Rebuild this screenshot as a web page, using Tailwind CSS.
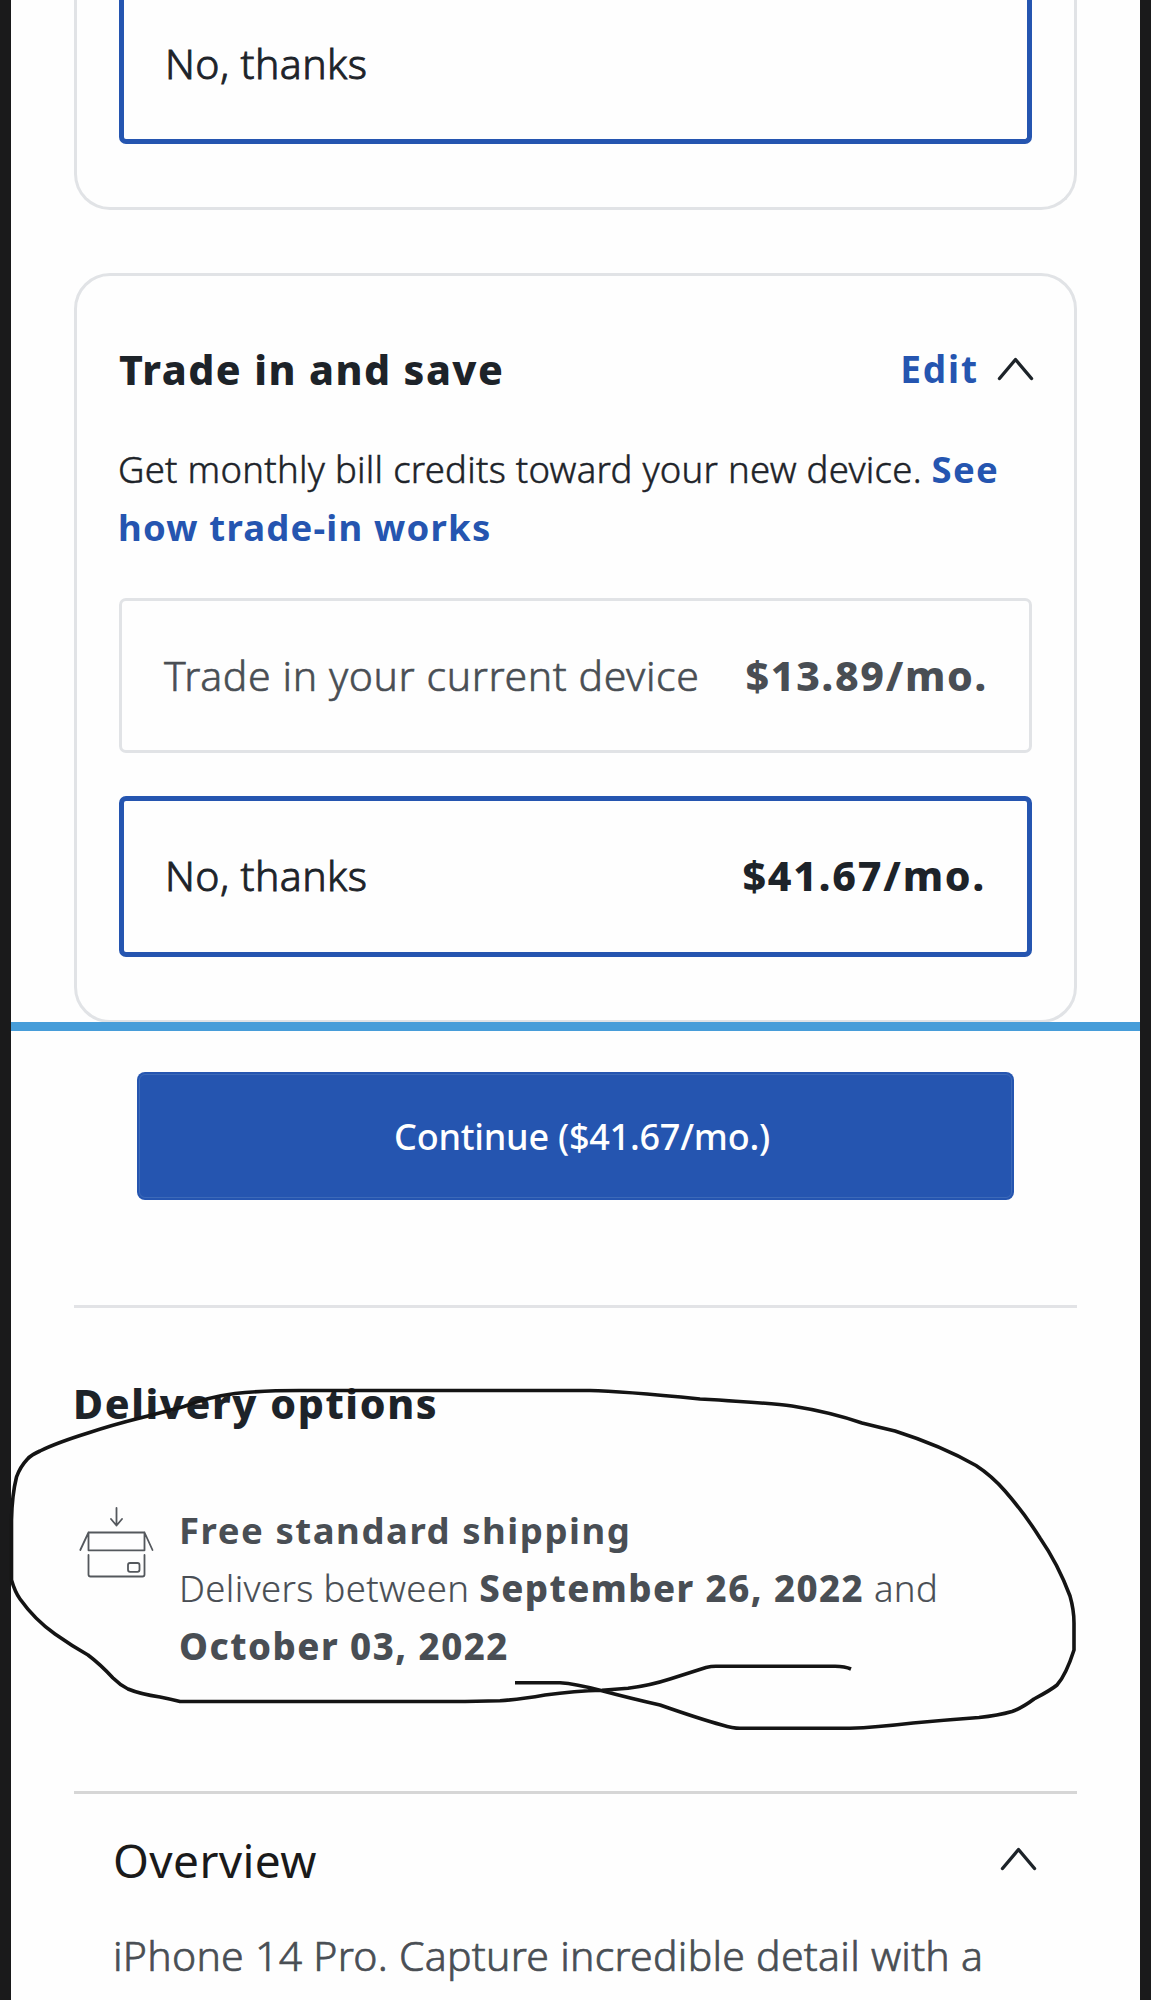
<!DOCTYPE html>
<html lang="en">
<head>
  <meta charset="UTF-8">
  <meta name="viewport" content="width=device-width, initial-scale=1.0">
  <title>iPhone 14 Pro</title>
  <script src="https://cdn.jsdelivr.net/npm/@tailwindcss/browser@4"></script>
</head>
<body class="bg-[#1a1a1b] font-['Noto_Sans','Open_Sans',sans-serif] text-[#1d2329]">
  <main class="relative ml-[11px] w-[1129px] h-[2000px] overflow-hidden bg-[#fefefe]">

    <!-- Previous card -->
    <section class="mx-[63px] h-[210px] px-[42px] border-[3px] border-t-0 border-[#e1e3e6] rounded-b-[36px]">
      <div class="h-[144px] pt-[43px] pl-[41px] border-[5px] border-t-0 border-[#2555b0] rounded-b-[7px]">
        <p class="text-[41px] leading-[40px] font-light tracking-[0.4px] [-webkit-text-stroke:0.9px]">No, thanks</p>
      </div>
    </section>

    <!-- Trade in -->
    <section class="mx-[63px] mt-[63px] h-[750px] px-[42px] pt-[69px] border-[3px] border-[#e1e3e6] rounded-[36px]">
      <div class="flex items-center justify-between h-[48px]">
        <h2 class="text-[41px] leading-[48px] font-extrabold tracking-[1.45px]">Trade in and save</h2>
        <div class="flex items-center gap-[18px] -mr-[2px]">
          <a class="text-[37px] leading-[46px] font-bold tracking-[1.9px] text-[#2555b0]">Edit</a>
          <svg class="w-[37px] h-[24px]" viewBox="0 0 37 24" fill="none" stroke="#1d2329" stroke-width="3.4" stroke-linecap="round" stroke-linejoin="round"><path d="M2.5 21.5 18.5 2.5 34.5 21.5"/></svg>
        </div>
      </div>
      <p class="mt-[47px] -ml-px text-[36.5px] leading-[58px] font-light tracking-[0.27px] whitespace-nowrap [-webkit-text-stroke:0.5px]">Get monthly bill credits toward your new device. <a class="font-bold tracking-[1.2px] text-[#2555b0] [-webkit-text-stroke:0]">See<br>how trade-in works</a></p>

      <div class="flex items-center justify-between mt-[42px] h-[155px] pl-[42px] pr-[41px] border-[3px] border-[#e1e3e6] rounded-[7px] text-[41px] text-[#494e54]">
        <span class="font-light tracking-[0.6px] [-webkit-text-stroke:0.6px]">Trade in your current device</span>
        <span class="font-extrabold tracking-[1.7px]">$13.89/mo.</span>
      </div>
      <div class="flex items-center justify-between mt-[43px] h-[161px] pl-[41px] pr-[41px] pb-[2px] border-[5px] border-[#2555b0] rounded-[7px] text-[41px]">
        <span class="font-light tracking-[0.4px] [-webkit-text-stroke:0.9px]">No, thanks</span>
        <span class="font-extrabold tracking-[1.8px]">$41.67/mo.</span>
      </div>
    </section>

    <!-- Sticky purchase bar -->
    <div class="relative -mt-px h-[9px] bg-[#479dd9]"></div>
    <button class="block ml-[126px] mt-[41px] w-[877px] h-[128px] p-[2px] bg-[#2555b0] rounded-[8px]">
      <span class="flex items-center justify-center w-full h-full pl-[13px] pt-[2px] border border-[#3c69b8] rounded-[6px] text-[36px] font-medium tracking-[-0.25px] text-white">Continue ($41.67/mo.)</span>
    </button>

    <!-- Delivery -->
    <section class="mx-[63px] mt-[105px] border-t-[3px] border-[#e2e3e6]">
      <h2 class="mt-[71px] -ml-px text-[41px] leading-[48px] font-extrabold tracking-[1.6px]">Delivery options</h2>
      <div class="flex mt-[74px] text-[#494e54]">
        <svg class="shrink-0 mt-[5px] ml-[4px] w-[76px] h-[74px]" viewBox="18 16 76 74" fill="none" stroke="#54585d" stroke-width="1.8" stroke-linecap="round" stroke-linejoin="round">
          <path d="M56.500 18V35.500M51 29l5.500 6.500L62 29"/>
          <path d="M28.500 42.500h56V60.300h-56zM28.500 42.500 20.300 60M84.500 42.500 92.500 60"/>
          <path d="M28.500 65V84.500a2 2 0 0 0 2 2H82.500a2 2 0 0 0 2-2V65"/>
          <rect x="68" y="73" width="11.500" height="8.800" rx="2"/>
        </svg>
        <div class="ml-[25px] text-[36.5px] leading-[58px] whitespace-nowrap">
          <p class="font-bold tracking-[1.55px]">Free standard shipping</p>
          <p class="font-light tracking-[0.35px] [-webkit-text-stroke:0.2px]">Delivers between <b class="font-extrabold tracking-[1.45px] [-webkit-text-stroke:0]">September 26, 2022</b> and</p>
          <p class="font-extrabold tracking-[1.5px]">October 03, 2022</p>
        </div>
      </div>
    </section>

    <!-- Overview -->
    <section class="mx-[63px] mt-[116px] pl-[39px] border-t-[3px] border-[#d6d6d6]">
      <div class="flex items-center justify-between mt-[36px] pr-[40px]">
        <h3 class="text-[46px] leading-[60px] tracking-[0.4px] text-[#1a1a1a]">Overview</h3>
        <svg class="-mt-[2px] w-[37px] h-[24px]" viewBox="0 0 37 24" fill="none" stroke="#1d2329" stroke-width="3.4" stroke-linecap="round" stroke-linejoin="round"><path d="M2.5 21.5 18.5 2.5 34.5 21.5"/></svg>
      </div>
      <p class="mt-[36px] text-[41px] leading-[58px] font-light tracking-[0.27px] whitespace-nowrap text-[#494e54] [-webkit-text-stroke:0.7px]">iPhone 14 Pro. Capture incredible detail with a</p>
    </section>
  </main>

  <!-- Hand-drawn circle over the delivery dates -->
  <svg class="absolute left-0 top-[1370px] w-[1151px] h-[380px] pointer-events-none" viewBox="0 1370 1151 380" fill="none" stroke="#141414" stroke-width="3.6" stroke-linecap="butt" stroke-linejoin="round">
    <path d="M515 1682.700H560Q575 1683.500 602 1690.700T660 1705Q700 1719 722 1725Q733 1728.300 740 1728.300H850Q875 1727.500 913 1723Q945 1720 979 1717.500Q998 1715.500 1012 1711.500Q1022 1708 1034 1699Q1051 1690 1057 1685Q1066 1675 1074 1650V1623Q1074 1610 1070 1596Q1058 1564 1040 1538Q1025 1514 1005 1491Q992 1476 976 1465.500Q942 1446 895 1431Q880 1427.500 862 1423Q830 1412 792 1406Q770 1403 700 1399Q620 1391 590 1390.500H300Q262 1390.500 235 1393.500Q208 1397 184 1406.500Q160 1413 140 1418Q112 1425 88 1433Q56 1443 40 1451Q31 1455 27.500 1459Q20 1467 16.500 1477Q12 1495 11.500 1520V1580Q15 1592 20 1599Q35 1620 55 1634Q72 1646 88 1655Q100 1664 113 1678Q120 1685 128 1689Q140 1694 160 1697Q170 1699 180 1701.500H465L500 1700.700Q520 1699.500 545 1695Q575 1691 602 1690.200L628 1688.300Q650 1685.500 670 1679Q692 1672 706 1667.500Q711 1666.300 716 1666.300H835Q845 1666.500 851 1669"/>
  </svg>
</body>
</html>
